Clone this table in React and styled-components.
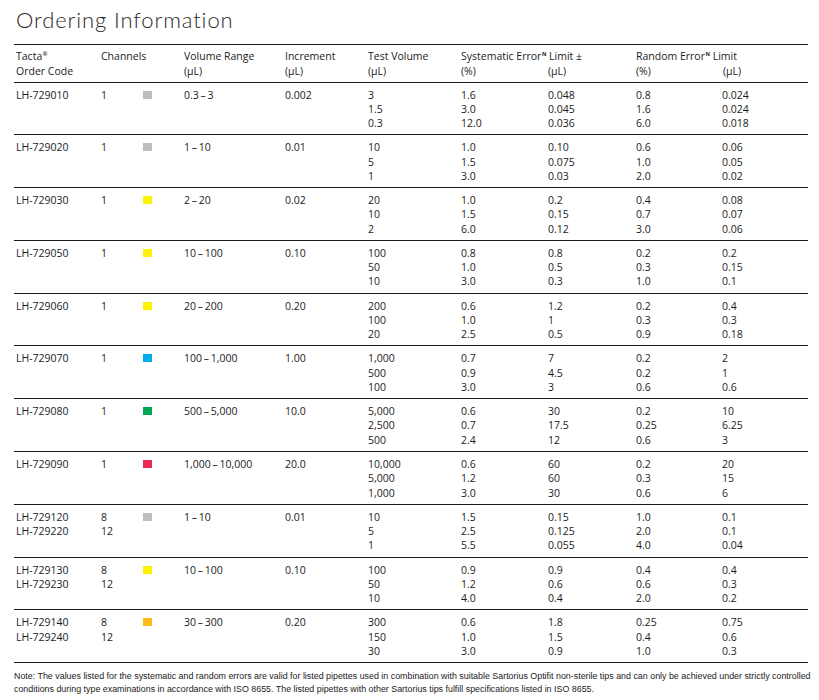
import React from "react";
import styled, { createGlobalStyle } from "styled-components";

const GlobalStyle = createGlobalStyle`
  body {
    margin: 0;
    background: #fff;
    color: #1c1c1c;
    font-family: "Open Sans", Lato, sans-serif;
  }
`;

const COLS = "85px 42px 41px 101px 83px 93px 87px 88px 86px 88px";

const SWATCH = {
  grey: "#bebec2",
  yellow: "#fff200",
  blue: "#00aeef",
  green: "#00a651",
  red: "#ea2a5a",
  orange: "#fdbb1a",
};

const rows = [
  { code: ["LH-729010"], ch: ["1"], color: "grey", range: "0.3\u2009\u2013\u20093", inc: "0.002", test: ["3", "1.5", "0.3"], sp: ["1.6", "3.0", "12.0"], su: ["0.048", "0.045", "0.036"], rp: ["0.8", "1.6", "6.0"], ru: ["0.024", "0.024", "0.018"] },
  { code: ["LH-729020"], ch: ["1"], color: "grey", range: "1\u2009\u2013\u200910", inc: "0.01", test: ["10", "5", "1"], sp: ["1.0", "1.5", "3.0"], su: ["0.10", "0.075", "0.03"], rp: ["0.6", "1.0", "2.0"], ru: ["0.06", "0.05", "0.02"] },
  { code: ["LH-729030"], ch: ["1"], color: "yellow", range: "2\u2009\u2013\u200920", inc: "0.02", test: ["20", "10", "2"], sp: ["1.0", "1.5", "6.0"], su: ["0.2", "0.15", "0.12"], rp: ["0.4", "0.7", "3.0"], ru: ["0.08", "0.07", "0.06"] },
  { code: ["LH-729050"], ch: ["1"], color: "yellow", range: "10\u2009\u2013\u2009100", inc: "0.10", test: ["100", "50", "10"], sp: ["0.8", "1.0", "3.0"], su: ["0.8", "0.5", "0.3"], rp: ["0.2", "0.3", "1.0"], ru: ["0.2", "0.15", "0.1"] },
  { code: ["LH-729060"], ch: ["1"], color: "yellow", range: "20\u2009\u2013\u2009200", inc: "0.20", test: ["200", "100", "20"], sp: ["0.6", "1.0", "2.5"], su: ["1.2", "1", "0.5"], rp: ["0.2", "0.3", "0.9"], ru: ["0.4", "0.3", "0.18"] },
  { code: ["LH-729070"], ch: ["1"], color: "blue", range: "100\u2009\u2013\u20091,000", inc: "1.00", test: ["1,000", "500", "100"], sp: ["0.7", "0.9", "3.0"], su: ["7", "4.5", "3"], rp: ["0.2", "0.2", "0.6"], ru: ["2", "1", "0.6"] },
  { code: ["LH-729080"], ch: ["1"], color: "green", range: "500\u2009\u2013\u20095,000", inc: "10.0", test: ["5,000", "2,500", "500"], sp: ["0.6", "0.7", "2.4"], su: ["30", "17.5", "12"], rp: ["0.2", "0.25", "0.6"], ru: ["10", "6.25", "3"] },
  { code: ["LH-729090"], ch: ["1"], color: "red", range: "1,000\u2009\u2013\u200910,000", inc: "20.0", test: ["10,000", "5,000", "1,000"], sp: ["0.6", "1.2", "3.0"], su: ["60", "60", "30"], rp: ["0.2", "0.3", "0.6"], ru: ["20", "15", "6"] },
  { code: ["LH-729120", "LH-729220"], ch: ["8", "12"], color: "grey", range: "1\u2009\u2013\u200910", inc: "0.01", test: ["10", "5", "1"], sp: ["1.5", "2.5", "5.5"], su: ["0.15", "0.125", "0.055"], rp: ["1.0", "2.0", "4.0"], ru: ["0.1", "0.1", "0.04"] },
  { code: ["LH-729130", "LH-729230"], ch: ["8", "12"], color: "yellow", range: "10\u2009\u2013\u2009100", inc: "0.10", test: ["100", "50", "10"], sp: ["0.9", "1.2", "4.0"], su: ["0.9", "0.6", "0.4"], rp: ["0.4", "0.6", "2.0"], ru: ["0.4", "0.3", "0.2"] },
  { code: ["LH-729140", "LH-729240"], ch: ["8", "12"], color: "orange", range: "30\u2009\u2013\u2009300", inc: "0.20", test: ["300", "150", "30"], sp: ["0.6", "1.0", "3.0"], su: ["1.8", "1.5", "0.9"], rp: ["0.25", "0.4", "1.0"], ru: ["0.75", "0.6", "0.3"] },
];

const Page = styled.div`
  width: 794px;
  padding: 5px 11px 0 14px;
`;

const Title = styled.h1`
  margin: 0 0 9px 2px;
  font-family: Lato, "Open Sans", sans-serif;
  font-size: 22px;
  font-weight: 300;
  line-height: 30px;
  color: #2a2a2a;
  letter-spacing: 0.9px;
`;

const Table = styled.div`
  border-top: 1px solid #1a1a1a;
  font-size: 10.5px;
`;

const Row = styled.div`
  display: grid;
  grid-template-columns: ${COLS};
  border-bottom: 1px solid #1a1a1a;
  padding: ${(p) => (p.$head ? "4px 0 2.5px" : "5px 0 3.9px")};
  line-height: ${(p) => (p.$head ? "15px" : "14.3px")};
`;

const Cell = styled.div`
  padding-left: 2px;
  grid-column: ${(p) => (p.$span ? `span ${p.$span}` : "auto")};
  white-space: nowrap;
`;

const SubHead = styled.div`
  display: grid;
  grid-template-columns: 87px 1fr;
`;

const Wide = styled.div`
  grid-column: 1 / -1;
`;

const Sup = styled.sup`
  font-size: 5.5px;
  font-weight: 700;
  vertical-align: top;
  line-height: 10px;
  margin-left: 0.5px;
`;

const Swatch = styled.span`
  display: block;
  width: 9px;
  height: 8px;
  margin-top: 3px;
  background: ${(p) => SWATCH[p.$color]};
`;

const Line = styled.div``;

const Note = styled.p`
  margin: 7px 0 0;
  font-family: "Liberation Sans", Arial, sans-serif;
  font-size: 8.9px;
  line-height: 13px;
  letter-spacing: 0;
  color: #222;
  white-space: nowrap;
`;

const Lines = ({ items }) => items.map((t, i) => <Line key={i}>{t}</Line>);

export default function App() {
  return (
    <Page>
      <GlobalStyle />
      <Title>Ordering Information</Title>
      <Table>
        <Row $head>
          <Cell>
            Tacta<Sup>®</Sup>
            <br />
            Order Code
          </Cell>
          <Cell $span={2}>Channels</Cell>
          <Cell>
            Volume Range
            <br />
            (µL)
          </Cell>
          <Cell>
            Increment
            <br />
            (µL)
          </Cell>
          <Cell>
            Test Volume
            <br />
            (µL)
          </Cell>
          <Cell $span={2}>
            <SubHead>
              <Wide>
                Systematic Error<Sup>N</Sup> Limit ±
              </Wide>
              <div>(%)</div>
              <div>(µL)</div>
            </SubHead>
          </Cell>
          <Cell $span={2}>
            <SubHead>
              <Wide>
                Random Error<Sup>N</Sup> Limit
              </Wide>
              <div>(%)</div>
              <div>(µL)</div>
            </SubHead>
          </Cell>
        </Row>
        {rows.map((r) => (
          <Row key={r.code[0]}>
            <Cell>
              <Lines items={r.code} />
            </Cell>
            <Cell>
              <Lines items={r.ch} />
            </Cell>
            <Cell>
              <Swatch $color={r.color} />
            </Cell>
            <Cell>{r.range}</Cell>
            <Cell>{r.inc}</Cell>
            <Cell>
              <Lines items={r.test} />
            </Cell>
            <Cell>
              <Lines items={r.sp} />
            </Cell>
            <Cell>
              <Lines items={r.su} />
            </Cell>
            <Cell>
              <Lines items={r.rp} />
            </Cell>
            <Cell>
              <Lines items={r.ru} />
            </Cell>
          </Row>
        ))}
      </Table>
      <Note>
        Note: The values listed for the systematic and random errors are valid for listed pipettes used in combination
        with suitable Sartorius Optifit non-sterile tips and can only be achieved under strictly controlled
        <br />
        conditions during type examinations in accordance with ISO 8655. The listed pipettes with other Sartorius tips
        fulfill specifications listed in ISO 8655.
      </Note>
    </Page>
  );
}
